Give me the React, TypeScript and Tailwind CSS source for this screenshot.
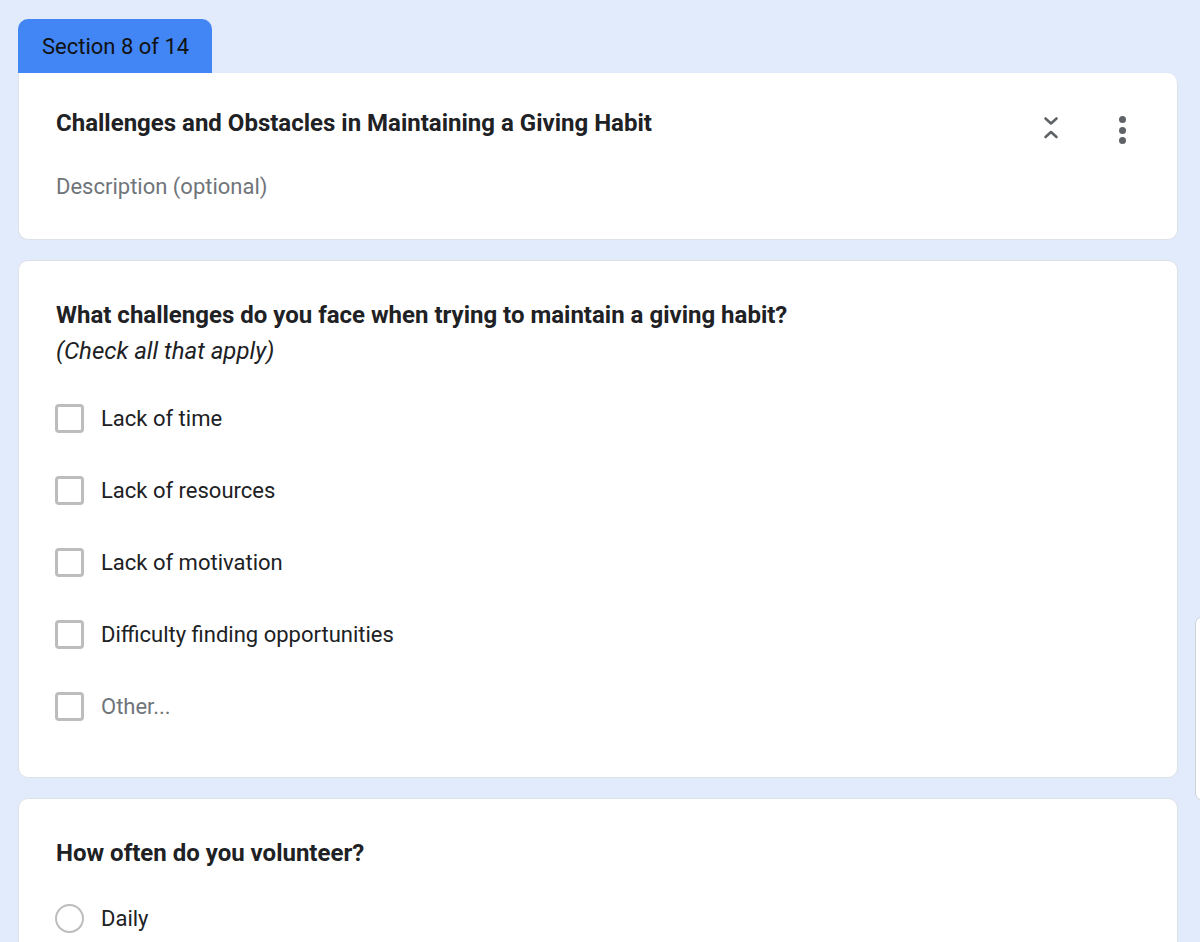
import React from "react";

function Checkbox() {
  return <div className="w-[29px] h-[29px] rounded-[4px] border-[3px] border-[#bdbdbd] shrink-0" />;
}

function Radio() {
  return <div className="w-[29px] h-[29px] rounded-full border-[2.5px] border-[#bdbdbd] shrink-0" />;
}

const options = ["Lack of time", "Lack of resources", "Lack of motivation", "Difficulty finding opportunities"];

export default function App() {
  return (
    <div
      className="relative w-[1200px] h-[942px] overflow-hidden bg-[#e2ebfc]"
      style={{ fontFamily: "Roboto, 'Noto Sans', sans-serif" }}
    >
      <div className="pt-[19px] pl-[18px] w-[1178px] flex flex-col">
        <div className="w-[194px] h-[54px] bg-[#4285f4] rounded-t-[10px] flex items-center pl-[24px] text-[22px] text-[#111] ">
          Section 8 of 14
        </div>
        <div className="bg-white rounded-b-[10px] rounded-tr-[10px] border border-[#dde1e8] border-t-0 h-[167px] relative">
          <div className="pl-[37px] pt-[36px] text-[24px] font-bold text-[#202124] leading-[28px]">
            Challenges and Obstacles in Maintaining a Giving Habit
          </div>
          <div className="pl-[37px] pt-[36px] text-[22px] text-[#70757a] leading-[28px]">Description (optional)</div>
          <div className="absolute right-[118px] top-[42px]">
            <svg width="16" height="26" viewBox="0 0 16 26">
              <path d="M2.5 3.5 L8 8.5 L13.5 3.5" fill="none" stroke="#5f6368" strokeWidth="2.6" strokeLinecap="round" strokeLinejoin="round" />
              <path d="M2.5 22 L8 17 L13.5 22" fill="none" stroke="#5f6368" strokeWidth="2.6" strokeLinecap="round" strokeLinejoin="round" />
            </svg>
          </div>
          <div className="absolute right-[51px] top-[43px] flex flex-col gap-[3.5px]">
            <div className="w-[7px] h-[7px] rounded-full bg-[#5f6368]" />
            <div className="w-[7px] h-[7px] rounded-full bg-[#5f6368]" />
            <div className="w-[7px] h-[7px] rounded-full bg-[#5f6368]" />
          </div>
        </div>

        <div className="mt-[20px] bg-white rounded-[10px] border border-[#dde1e8] h-[518px] pl-[36px] pt-[39px]">
          <div className="pl-[1px] text-[24px] font-bold text-[#202124] leading-[30px]">
            What challenges do you face when trying to maintain a giving habit?
          </div>
          <div className="pl-[1px] text-[24px] italic text-[#202124] leading-[30px] mt-[6px]">(Check all that apply)</div>
          <div className="mt-[38px] flex flex-col gap-[43px]">
            {options.map((o) => (
              <div key={o} className="flex items-center gap-[17px] h-[29px]">
                <Checkbox />
                <span className="text-[22px] text-[#202124]">{o}</span>
              </div>
            ))}
            <div className="flex items-center gap-[17px] h-[29px]">
              <Checkbox />
              <span className="text-[22px] text-[#70757a]">Other...</span>
            </div>
          </div>
        </div>

        <div className="mt-[20px] bg-white rounded-t-[10px] border border-[#dde1e8] h-[200px] pl-[36px] pt-[39px]">
          <div className="pl-[1px] text-[24px] font-bold text-[#202124] leading-[30px]">How often do you volunteer?</div>
          <div className="mt-[36px] flex items-center gap-[17px] h-[29px]">
            <Radio />
            <span className="text-[22px] text-[#202124]">Daily</span>
          </div>
        </div>
      </div>
      <div className="absolute left-[1195px] top-[616px] w-[20px] h-[185px] bg-white rounded-l-[8px] border border-[#cfd4dc]" />
    </div>
  );
}
